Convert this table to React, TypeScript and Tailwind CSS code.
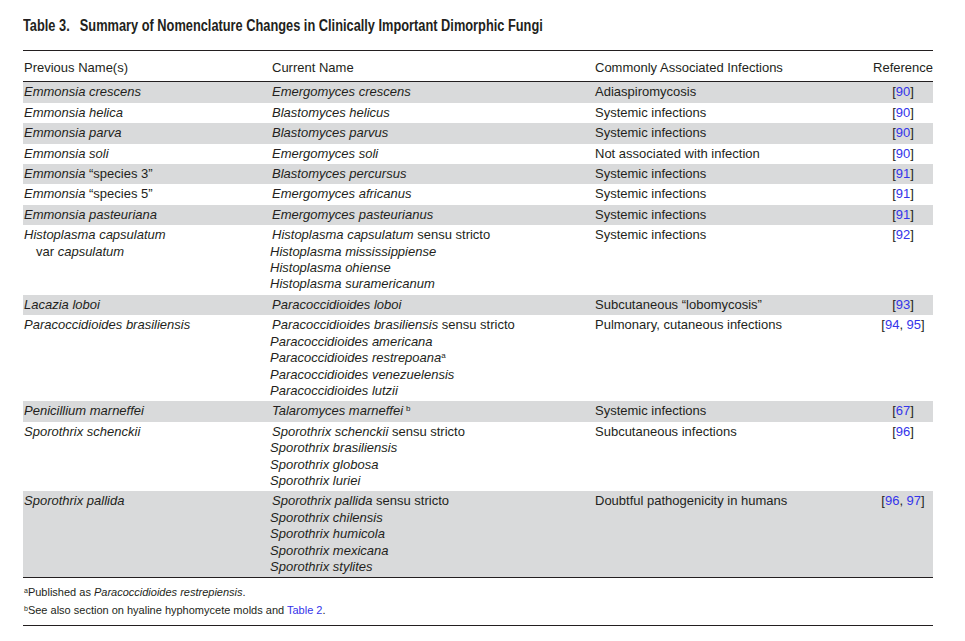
import React from "react";

type Line = { it: string; rest?: string; sup?: string; indent?: boolean };

interface Row {
    prev: Line[];
    curr: Line[];
    infection: string;
    refs: string[];
    shaded: boolean;
}

const rows: Row[] = [
    { prev: [{ it: "Emmonsia crescens" }], curr: [{ it: "Emergomyces crescens" }], infection: "Adiaspiromycosis", refs: ["90"], shaded: true },
    { prev: [{ it: "Emmonsia helica" }], curr: [{ it: "Blastomyces helicus" }], infection: "Systemic infections", refs: ["90"], shaded: false },
    { prev: [{ it: "Emmonsia parva" }], curr: [{ it: "Blastomyces parvus" }], infection: "Systemic infections", refs: ["90"], shaded: true },
    { prev: [{ it: "Emmonsia soli" }], curr: [{ it: "Emergomyces soli" }], infection: "Not associated with infection", refs: ["90"], shaded: false },
    { prev: [{ it: "Emmonsia", rest: " \u201Cspecies 3\u201D" }], curr: [{ it: "Blastomyces percursus" }], infection: "Systemic infections", refs: ["91"], shaded: true },
    { prev: [{ it: "Emmonsia", rest: " \u201Cspecies 5\u201D" }], curr: [{ it: "Emergomyces africanus" }], infection: "Systemic infections", refs: ["91"], shaded: false },
    { prev: [{ it: "Emmonsia pasteuriana" }], curr: [{ it: "Emergomyces pasteurianus" }], infection: "Systemic infections", refs: ["91"], shaded: true },
    {
        prev: [{ it: "Histoplasma capsulatum" }, { it: "capsulatum", indent: true }],
        curr: [
            { it: "Histoplasma capsulatum", rest: " sensu stricto" },
            { it: "Histoplasma mississippiense", indent: true },
            { it: "Histoplasma ohiense", indent: true },
            { it: "Histoplasma suramericanum", indent: true },
        ],
        infection: "Systemic infections",
        refs: ["92"],
        shaded: false,
    },
    { prev: [{ it: "Lacazia loboi" }], curr: [{ it: "Paracoccidioides loboi" }], infection: "Subcutaneous \u201Clobomycosis\u201D", refs: ["93"], shaded: true },
    {
        prev: [{ it: "Paracoccidioides brasiliensis" }],
        curr: [
            { it: "Paracoccidioides brasiliensis", rest: " sensu stricto" },
            { it: "Paracoccidioides americana", indent: true },
            { it: "Paracoccidioides restrepoana", sup: "a", indent: true },
            { it: "Paracoccidioides venezuelensis", indent: true },
            { it: "Paracoccidioides lutzii", indent: true },
        ],
        infection: "Pulmonary, cutaneous infections",
        refs: ["94", "95"],
        shaded: false,
    },
    { prev: [{ it: "Penicillium marneffei" }], curr: [{ it: "Talaromyces marneffei", sup: "b" }], infection: "Systemic infections", refs: ["67"], shaded: true },
    {
        prev: [{ it: "Sporothrix schenckii" }],
        curr: [
            { it: "Sporothrix schenckii", rest: " sensu stricto" },
            { it: "Sporothrix brasiliensis", indent: true },
            { it: "Sporothrix globosa", indent: true },
            { it: "Sporothrix luriei", indent: true },
        ],
        infection: "Subcutaneous infections",
        refs: ["96"],
        shaded: false,
    },
    {
        prev: [{ it: "Sporothrix pallida" }],
        curr: [
            { it: "Sporothrix pallida", rest: " sensu stricto" },
            { it: "Sporothrix chilensis", indent: true },
            { it: "Sporothrix humicola", indent: true },
            { it: "Sporothrix mexicana", indent: true },
            { it: "Sporothrix stylites", indent: true },
        ],
        infection: "Doubtful pathogenicity in humans",
        refs: ["96", "97"],
        shaded: true,
    },
];

function NameLine({ line, prevCol }: { line: Line; prevCol?: boolean }) {
    // the "var capsulatum" line in the first column is indented with an upright "var"
    if (prevCol && line.indent) {
        return (
            <div className="pl-[12px]">
                var <i>{line.it}</i>
            </div>
        );
    }
    return (
        <div className={line.indent ? "-ml-[2px]" : ""}>
            <i>{line.it}</i>
            {line.rest}
            {line.sup && (
                <sup className={`text-[8px] ${line.sup === "b" ? "ml-[3px]" : ""}`}>{line.sup}</sup>
            )}
        </div>
    );
}

function Refs({ refs }: { refs: string[] }) {
    return (
        <span>
            [
            {refs.map((r, i) => (
                <React.Fragment key={r}>
                    {i > 0 && ", "}
                    <span className="text-[#3434ea]">{r}</span>
                </React.Fragment>
            ))}
            ]
        </span>
    );
}

export default function App() {
    return (
        <div className="bg-white w-[965px] h-[641px] text-[#231f20] font-['Liberation_Sans',Arial,sans-serif] pl-[23px] pr-[32px] pt-[17px]">
            {/* TITLE - condensed bold, narrowed with scale-x */}
            <div className="font-bold text-[16px] leading-[18px] flex whitespace-nowrap origin-left scale-x-[0.8]">
                <span className="w-[71px] shrink-0">Table 3.</span>
                <span>Summary of Nomenclature Changes in Clinically Important Dimorphic Fungi</span>
            </div>

            {/* TABLE */}
            <table className="mt-[15px] w-[910px] border-collapse table-fixed text-[13px] leading-[16.4px]">
                <colgroup>
                    <col className="w-[248px]" />
                    <col className="w-[323px]" />
                    <col className="w-[279px]" />
                    <col className="w-[60px]" />
                </colgroup>
                <thead>
                    <tr className="border-t border-b border-[#231f20]">
                        <th className="font-normal text-left pl-[1px] pt-[9px] pb-[5px]">Previous Name(s)</th>
                        <th className="font-normal text-left pl-[1px] pt-[9px] pb-[5px]">Current Name</th>
                        <th className="font-normal text-left pl-[1px] pt-[9px] pb-[5px]">Commonly Associated Infections</th>
                        <th className="font-normal text-right pt-[9px] pb-[5px]">Reference</th>
                    </tr>
                </thead>
                <tbody className="border-b border-[#231f20]">
                    {rows.map((row, i) => (
                        <tr key={i} className={row.shaded ? "bg-[#d9dadb]" : "bg-white"}>
                            <td className="align-top pl-[1px] py-[2px]">
                                {row.prev.map((l, j) => (
                                    <NameLine key={j} line={l} prevCol />
                                ))}
                            </td>
                            <td className="align-top pl-[1px] py-[2px]">
                                {row.curr.map((l, j) => (
                                    <NameLine key={j} line={l} />
                                ))}
                            </td>
                            <td className="align-top pl-[1px] py-[2px]">{row.infection}</td>
                            <td className="align-top text-center py-[2px]">
                                <Refs refs={row.refs} />
                            </td>
                        </tr>
                    ))}
                </tbody>
            </table>

            {/* FOOTNOTES */}
            <div className="w-[910px] border-b border-[#231f20] text-[11px] leading-[18px] pt-[5px] pb-[6px] pl-[1px]">
                <div>
                    <sup className="text-[7px]">a</sup>Published as <i>Paracoccidioides restrepiensis</i>.
                </div>
                <div>
                    <sup className="text-[7px]">b</sup>See also section on hyaline hyphomycete molds and{" "}
                    <span className="text-[#3434ea]">Table 2</span>.
                </div>
            </div>
        </div>
    );
}
